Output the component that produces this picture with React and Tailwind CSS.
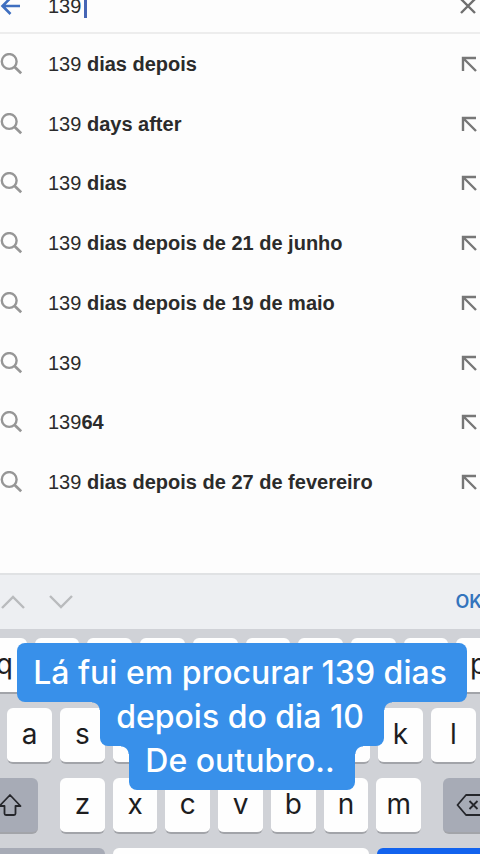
import { useState } from "react";
import clsx from "clsx";

const suggestions = [
  { typed: "139", rest: " dias depois" },
  { typed: "139", rest: " days after" },
  { typed: "139", rest: " dias" },
  { typed: "139", rest: " dias depois de 21 de junho" },
  { typed: "139", rest: " dias depois de 19 de maio" },
  { typed: "139", rest: "" },
  { typed: "139", rest: "64" },
  { typed: "139", rest: " dias depois de 27 de fevereiro" },
];

// each line sits over the next one, so descenders stay visible
const captionLines = [
  { text: "Lá fui em procurar 139 dias", layer: "z-30" },
  { text: "depois do dia 10", layer: "z-20" },
  { text: "De outubro..", layer: "z-10" },
];

const BackIcon = () => (
  <svg width="20" height="18" viewBox="0 0 20 18" fill="none" stroke="#3f6fc0" strokeWidth="2.6">
    <path d="M20 9H2.5M10.5 1 2.5 9l8 8" />
  </svg>
);

const CloseIcon = () => (
  <svg width="16" height="16" viewBox="0 0 16 16" fill="none" stroke="#6f6f6f" strokeWidth="2.4">
    <path d="m1 1 14 14M15 1 1 15" />
  </svg>
);

const SearchIcon = () => (
  <svg width="22" height="22" viewBox="0 0 22 22" fill="none" stroke="#969696" strokeWidth="2.4">
    <circle cx="9.2" cy="8.5" r="7.4" />
    <path d="m14.4 13.7 6.8 6.6" strokeWidth="2.8" />
  </svg>
);

const FillIcon = () => (
  <svg width="16" height="16" viewBox="0 0 16 16" fill="none" stroke="#777777" strokeWidth="2.4">
    <path d="M15 2H2v13M2 2l13 13" />
  </svg>
);

const ShiftIcon = () => (
  <svg width="24" height="24" viewBox="0 0 24 24" fill="none" stroke="#25262b" strokeWidth="1.8" strokeLinejoin="round">
    <path d="M12 2 1.5 13H6.500v7.500q0 1.500 1.500 1.500h8q1.500 0 1.500-1.500V13H22.500Z" />
  </svg>
);

const DeleteIcon = () => (
  <svg width="32" height="24" viewBox="0 0 32 24" fill="none" stroke="#25262b" strokeWidth="1.8" strokeLinejoin="round">
    <path d="M10 2h17q3 0 3 3v14q0 3-3 3H10L1.500 12Z" />
    <path d="m13.500 8 8 8M21.500 8l-8 8" />
  </svg>
);

const Key = ({ label, className, children }) => (
  <button
    type="button"
    aria-label={label}
    className={clsx(
      "flex h-14 min-w-0 items-center justify-center rounded-md border-b-2 border-[#a2a4a9] text-[28px] leading-8 text-[#1d1d1f]",
      className
    )}
  >
    {children}
  </button>
);

const Letters = ({ letters }) =>
  letters.split("").map((letter) => (
    <Key key={letter} label={letter} className="flex-1 bg-[#fefefe] pb-0.5">
      {letter}
    </Key>
  ));

const Keyboard = () => (
  <div className="-mr-[21px] -ml-[18px] flex flex-col gap-[14px] pt-[9px] font-['Inter',sans-serif]">
    <div className="flex gap-2">
      <Letters letters="qwertyuiop" />
    </div>
    <div className="flex gap-2 px-[25px]">
      <Letters letters="asdfghjkl" />
    </div>
    <div className="flex gap-[22px]">
      <Key label="Shift" className="w-14 bg-[#a7abb6]">
        <ShiftIcon />
      </Key>
      <div className="flex flex-1 gap-2">
        <Letters letters="zxcvbnm" />
      </div>
      <Key label="Apagar" className="w-[58px] bg-[#a7abb6]">
        <DeleteIcon />
      </Key>
    </div>
    <div className="flex gap-2">
      <Key label="Números" className="w-[123px] bg-[#a7abb6]" />
      <Key label="Espaço" className="flex-1 bg-[#fefefe]" />
      <Key label="Ir" className="w-[124px] bg-[#1263ee]" />
    </div>
  </div>
);

const Caption = () => (
  <div className="absolute inset-x-0 top-[14px] ml-1 flex flex-col items-center font-['Inter',sans-serif] text-[32px] leading-[59px] font-medium text-white">
    {captionLines.map(({ text, layer }, index) => (
      <p
        key={text}
        className={clsx(
          "relative rounded-lg bg-[#3890ea] pr-5 pl-4 whitespace-nowrap",
          layer,
          index > 0 && "-mt-[15px]"
        )}
      >
        {/* inner corners where a narrower line meets the one above */}
        {index > 0 && (
          <>
            <span className="absolute top-[15px] right-full size-2 bg-[radial-gradient(circle_at_0_100%,transparent_7px,#3890ea_8px)]" />
            <span className="absolute top-[15px] left-full size-2 bg-[radial-gradient(circle_at_100%_100%,transparent_7px,#3890ea_8px)]" />
          </>
        )}
        {text}
      </p>
    ))}
  </div>
);

const App = () => {
  const [query, setQuery] = useState("139");

  return (
    <div className="flex h-screen flex-col overflow-hidden bg-[#fdfdfd] font-['Liberation_Sans',sans-serif] text-xl text-[#2b2b2b]">
      <header className="shrink-0 border-b-2 border-[#ededed] pb-5">
        <div className="flex h-3 items-center justify-between pr-1">
          <button type="button" aria-label="Voltar" className="w-12">
            <BackIcon />
          </button>
          <div className="relative flex-1">
            <input
              type="text"
              aria-label="Pesquisar"
              value={query}
              onChange={(e) => setQuery(e.target.value)}
              className="block w-full leading-6 outline-none"
            />
            <span className="absolute top-0 left-9 h-6 w-[3px] bg-[#4565b5]" />
          </div>
          <button type="button" aria-label="Limpar">
            <CloseIcon />
          </button>
        </div>
      </header>

      <ul className="flex h-[478px] shrink-0 flex-col">
        {suggestions.map(({ typed, rest }) => (
          <li key={rest} className="flex flex-1 items-center pr-[3px]">
            <button type="button" className="flex flex-1 items-center text-left">
              <span className="w-12">
                <SearchIcon />
              </span>
              <span className="whitespace-pre">
                {typed}
                <b>{rest}</b>
              </span>
            </button>
            <button type="button" aria-label={`Usar ${typed}${rest}`}>
              <FillIcon />
            </button>
          </li>
        ))}
      </ul>

      <div className="mt-[61px] flex h-14 shrink-0 items-center border-t-2 border-[#e0e2e4] bg-[#edeff2]">
        <button type="button" aria-label="Anterior" className="w-12">
          <svg width="26" height="16" viewBox="0 0 26 16" fill="none" stroke="#b9bbbd" strokeWidth="2.4">
            <path d="M2 14 13 3l11 11" />
          </svg>
        </button>
        <button type="button" aria-label="Seguinte">
          <svg width="26" height="16" viewBox="0 0 26 16" fill="none" stroke="#b9bbbd" strokeWidth="2.4">
            <path d="m2 2 11 11L24 2" />
          </svg>
        </button>
        <button
          type="button"
          className="-mr-0.5 ml-auto font-['Inter',sans-serif] text-lg font-semibold text-[#3474bd]"
        >
          OK
        </button>
      </div>

      <div className="relative flex-1 bg-[#d0d2d7]">
        <Keyboard />
        <Caption />
      </div>
    </div>
  );
};

export default App;
